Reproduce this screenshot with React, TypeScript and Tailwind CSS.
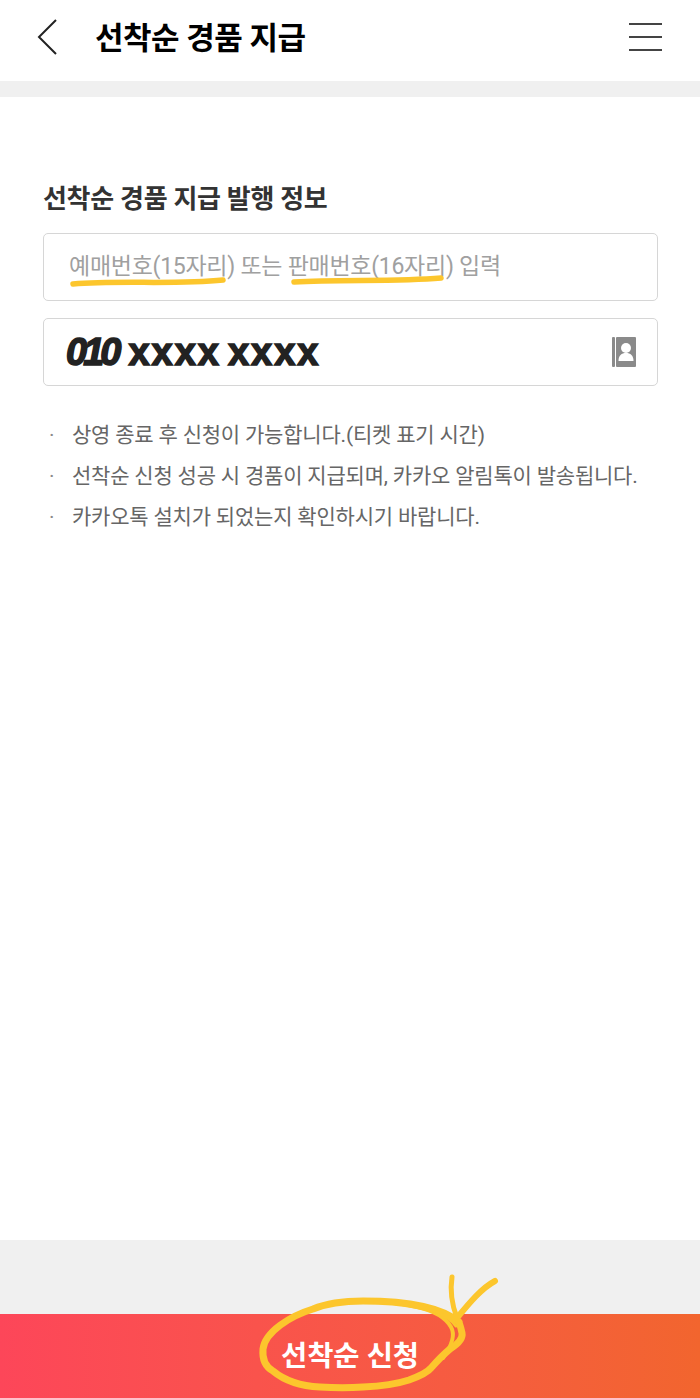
const font = { fontFamily: 'Roboto, "Noto Sans CJK KR", "Liberation Sans", sans-serif' };

const notices = [
  "상영 종료 후 신청이 가능합니다.(티켓 표기 시간)",
  "선착순 신청 성공 시 경품이 지급되며, 카카오 알림톡이 발송됩니다.",
  "카카오톡 설치가 되었는지 확인하시기 바랍니다.",
];

function ContactIcon() {
  return (
    <svg width="24" height="30" viewBox="0 0 24 30" fill="none">
      <rect x="0" y="0" width="3" height="30" rx="1" fill="#8a8a8a" />
      <rect x="4" y="0" width="20" height="30" rx="1" fill="#8a8a8a" />
      <circle cx="14" cy="11" r="5" fill="#fff" />
      <path d="M6.500 24c0-5.500 3-8 7.500-8s7.500 2.500 7.500 8z" fill="#fff" />
    </svg>
  );
}

export default function App() {
  return (
    <div style={font} className="relative flex h-[1398px] w-[700px] flex-col overflow-hidden bg-white">
      <header className="flex h-[81px] items-center justify-between pr-[38px] pb-[7px] pl-[37px]">
        <div className="flex items-center">
          <svg width="20" height="36" viewBox="0 0 20 36" fill="none">
            <path d="M19 1 2 18l17 17" stroke="#222" strokeWidth="2" />
          </svg>
          <h1 className="mt-[3px] ml-[38px] text-[31px] leading-none font-bold tracking-[-0.5px] text-black">선착순 경품 지급</h1>
        </div>
        <div className="flex h-[28px] w-[33px] flex-col justify-between">
          <span className="h-[2px] bg-[#444]" />
          <span className="h-[2px] bg-[#444]" />
          <span className="h-[2px] bg-[#444]" />
        </div>
      </header>
      <div className="h-[16px] bg-[#f0f0f0]" />

      <main className="flex-1 px-[43px] pt-[84px]">
        <h2 className="text-[26px] leading-[36px] font-bold tracking-[-0.3px] text-[#333]">선착순 경품 지급 발행 정보</h2>
        <div className="mt-[16px] flex h-[68px] w-[615px] items-center rounded-[5px] border-[1.5px] border-[#d6d6d6] pt-[1px] pl-[25px] text-[23px] tracking-[-0.27px] text-[#a0a0a0]">
          예매번호(15자리) 또는 판매번호(16자리) 입력
        </div>
        <div className="mt-[17px] flex h-[68px] w-[615px] items-center justify-between rounded-[5px] border-[1.5px] border-[#d6d6d6] pr-[21px] pl-[22px]">
          <span className="flex items-center text-[38px] leading-none font-bold tracking-[2px] text-[#222] [-webkit-text-stroke:1.5px_#222] [font-family:'Liberation_Sans',sans-serif]">
            <span className="tracking-[-4px] italic">010</span>
            <span className="ml-[11px]">xxxx</span>
            <span className="ml-[7px]">xxxx</span>
          </span>
          <ContactIcon />
        </div>
        <ul className="mt-[33px] flex flex-col gap-[9px] text-[21px] leading-[32px] tracking-[-0.2px] text-[#666]">
          {notices.map((n) => (
            <li key={n} className="flex whitespace-nowrap">
              <span className="w-[29px] pl-[6px] text-[#888]">·</span>
              <span>{n}</span>
            </li>
          ))}
        </ul>
      </main>

      <div className="h-[74px] bg-[#f0f0f0]" />
      <button className="flex h-[84px] items-center justify-center bg-gradient-to-r from-[#fd4659] to-[#f2652e] pt-[3px] text-[28.5px] font-bold text-white">
        선착순 신청
      </button>

      {/* yellow marker scribbles */}
      <svg className="pointer-events-none absolute top-0 left-0" width="700" height="1398" fill="none">
        <g stroke="#fcc62d" strokeLinecap="round" strokeLinejoin="round">
          <path d="M73 284C120 280 175 285 223 280" strokeWidth="5.500" />
          <path d="M294 282C340 279 395 282 441 278" strokeWidth="5.500" />
          <path
            d="M459 1322C440 1306 400 1301 363 1301C340 1301 325 1304 313 1309C290 1316 265 1332 263 1349C262 1360 266 1367 273 1371C285 1381 300 1386 320 1387C335 1388 350 1388 363 1387C385 1386 397 1384 409 1380C420 1376 427 1373 431 1368C438 1360 444 1354 450 1349C458 1344 463 1338 462 1333C461 1328 460 1325 459 1322"
            strokeWidth="7"
          />
          <path d="M375 1302C395 1302 405 1304 417 1307C435 1311 446 1318 451 1327C455 1334 453 1344 443 1358" strokeWidth="4" />
          <path d="M410 1304C430 1308 448 1315 456 1326" strokeWidth="3" />
          <path d="M452 1277C450 1290 452 1305 457 1318" strokeWidth="5" />
          <path d="M495 1281C482 1288 470 1302 457 1318" strokeWidth="6" />
        </g>
      </svg>
    </div>
  );
}
